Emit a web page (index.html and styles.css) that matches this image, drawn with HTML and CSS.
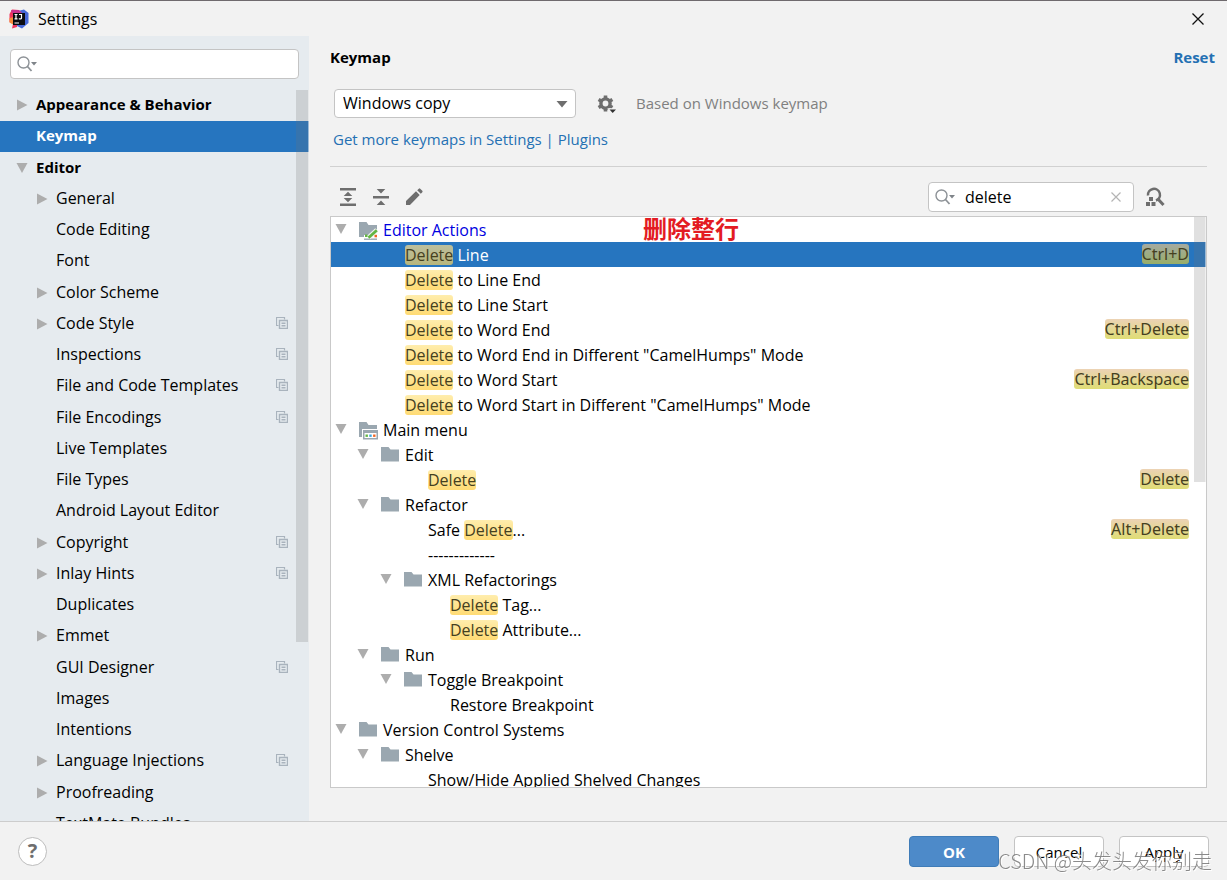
FILE: index.html
```html
<!DOCTYPE html>
<html lang="en">
  <head>
    <meta charset="UTF-8" />
    <meta name="viewport" content="width=device-width, initial-scale=1.0" />
    <title>Settings</title>
    <link rel="stylesheet" href="styles.css">
  </head>
  <body>
    <!-- Shared icons -->
    <svg class="sprite" aria-hidden="true">
      <symbol id="i-right" viewBox="0 0 12 12"><path d="M1 0.5 L11.5 6 L1 11.5Z" fill="#adadad" /></symbol>
      <symbol id="i-down" viewBox="0 0 12 12"><path d="M0.5 1 H11.5 L6 11Z" fill="#adadad" /></symbol>
      <symbol id="i-folder" viewBox="0 0 18 16"><path d="M0 0 H7.5 L9.5 2.5 H18 V14.5 H0Z" fill="#9aa7b0" /></symbol>
      <symbol id="i-folder-edit" viewBox="0 0 20 18">
        <path d="M0 0 H7.5 L9.5 3 H18 V7 L11 13 H5 V15 H0Z" fill="#9aa7b0" />
        <path d="M5 17.2 H18" stroke="#9aa7b0" stroke-width="1.4" />
        <path d="M9.5 15.5 L17.8 8" stroke="#f2f2f2" stroke-width="4.5" />
        <path d="M9.5 15.8 L17.8 8.3" stroke="#62b543" stroke-width="2.8" />
        <path d="M6 12.5 h2.5 v2.5 h-2.5Z" fill="#62b543" />
        <path d="M15.5 12.8 h2.5 v2.5 h-2.5Z" fill="#f26522" />
      </symbol>
      <symbol id="i-folder-menu" viewBox="0 0 20 18">
        <path d="M0 0 H7.5 L9.5 3 H18 V7 H3 V15 H0Z" fill="#9aa7b0" />
        <path d="M4 8 H19 V17.5 H4Z" fill="#9aa7b0" />
        <path d="M5.5 11 H17.5 V16 H5.5Z" fill="#fff" />
        <path d="M6.5 12.5 h2.4 v2.4 h-2.4Z" fill="#62b543" />
        <path d="M10.3 12.5 h2.4 v2.4 h-2.4Z" fill="#40a5dd" />
        <path d="M14.1 12.5 h2.4 v2.4 h-2.4Z" fill="#f26522" />
      </symbol>
      <symbol id="i-project" viewBox="0 0 12 12">
        <path d="M2.5 8.5 H0.5 V0.5 H8.5 V2.5" fill="none" stroke="#a9b3bd" stroke-width="1.2" />
        <path d="M3.5 3.5 H11.5 V11.5 H3.5Z M5.5 6.2 H9.5 M5.5 8.8 H9.5" fill="none" stroke="#a9b3bd" stroke-width="1.4" />
      </symbol>
      <symbol id="i-search" viewBox="0 0 20 16">
        <circle cx="6.5" cy="6.5" r="5.5" fill="none" stroke="#8d9297" stroke-width="1.4" />
        <path d="M10.5 10.5 L14.5 15" stroke="#8d9297" stroke-width="1.8" />
        <path d="M14 6 H20 L17 9.5Z" fill="#7f8489" />
      </symbol>
    </svg>

    <header class="titlebar">
      <svg class="app-icon" viewBox="0 0 20 20" aria-hidden="true">
        <path d="M0.5 5 L3 0.5 L10 1 L8 18 L3 19.5 L4 15 L0.5 13Z" fill="#f0345f" />
        <path d="M0.5 9 L5 8 V16 L0.5 13.5Z" fill="#f98b3a" />
        <path d="M9 2 L15 0.5 L19.5 4 V14 L13 19.5 L8 17Z" fill="#4668d8" />
        <path d="M2 1 L10 1 L13 4 H3Z" fill="#c8338f" />
        <path d="M4 4 H16 V16 H4Z" fill="#0b0b10" />
        <path d="M5.5 5.5 H8.5 M7 5.5 V9.8 M5.5 9.8 H8.5 M10 5.5 H12.5 V9 Q12.5 10 11 9.8 H9.8 M5.5 14 H10" fill="none" stroke="#fff" stroke-width="1.2" />
      </svg>
      <h1 class="window-title">Settings</h1>
      <button class="icon-button close" type="button" aria-label="Close">
        <svg width="12" height="12" viewBox="0 0 12 12"><path d="M0.5 0.5 L11.5 11.5 M11.5 0.5 L0.5 11.5" stroke="#111" stroke-width="1.3" /></svg>
      </button>
    </header>

    <div class="content">
      <nav class="sidebar" aria-label="Settings sections">
        <div class="search-field sidebar-search">
          <svg class="search-icon"><use href="#i-search" /></svg>
          <input type="text" aria-label="Search settings" />
        </div>
        <div class="scroll-area">
          <ul class="sections">
            <li class="top"><svg class="arrow"><use href="#i-right" /></svg><a href="#">Appearance &amp; Behavior</a></li>
            <li class="top selected"><span class="arrow"></span><a href="#">Keymap</a></li>
            <li class="top"><svg class="arrow"><use href="#i-down" /></svg><a href="#">Editor</a></li>
            <li><svg class="arrow"><use href="#i-right" /></svg><a href="#">General</a></li>
            <li><span class="arrow"></span><a href="#">Code Editing</a></li>
            <li><span class="arrow"></span><a href="#">Font</a></li>
            <li><svg class="arrow"><use href="#i-right" /></svg><a href="#">Color Scheme</a></li>
            <li><svg class="arrow"><use href="#i-right" /></svg><a href="#">Code Style</a><svg class="project"><use href="#i-project" /></svg></li>
            <li><span class="arrow"></span><a href="#">Inspections</a><svg class="project"><use href="#i-project" /></svg></li>
            <li><span class="arrow"></span><a href="#">File and Code Templates</a><svg class="project"><use href="#i-project" /></svg></li>
            <li><span class="arrow"></span><a href="#">File Encodings</a><svg class="project"><use href="#i-project" /></svg></li>
            <li><span class="arrow"></span><a href="#">Live Templates</a></li>
            <li><span class="arrow"></span><a href="#">File Types</a></li>
            <li><span class="arrow"></span><a href="#">Android Layout Editor</a></li>
            <li><svg class="arrow"><use href="#i-right" /></svg><a href="#">Copyright</a><svg class="project"><use href="#i-project" /></svg></li>
            <li><svg class="arrow"><use href="#i-right" /></svg><a href="#">Inlay Hints</a><svg class="project"><use href="#i-project" /></svg></li>
            <li><span class="arrow"></span><a href="#">Duplicates</a></li>
            <li><svg class="arrow"><use href="#i-right" /></svg><a href="#">Emmet</a></li>
            <li><span class="arrow"></span><a href="#">GUI Designer</a><svg class="project"><use href="#i-project" /></svg></li>
            <li><span class="arrow"></span><a href="#">Images</a></li>
            <li><span class="arrow"></span><a href="#">Intentions</a></li>
            <li><svg class="arrow"><use href="#i-right" /></svg><a href="#">Language Injections</a><svg class="project"><use href="#i-project" /></svg></li>
            <li><svg class="arrow"><use href="#i-right" /></svg><a href="#">Proofreading</a></li>
            <li><span class="arrow"></span><a href="#">TextMate Bundles</a></li>
          </ul>
          <div class="scrollbar"></div>
        </div>
      </nav>

      <main class="panel">
        <div class="panel-header">
          <h2>Keymap</h2>
          <a class="reset" href="#">Reset</a>
        </div>

        <div class="scheme">
          <div class="select-box">
            <select aria-label="Keymap scheme">
              <option>Windows copy</option>
            </select>
            <svg width="12" height="8" viewBox="0 0 12 8"><path d="M0.5 1 H11.5 L6 7.5Z" fill="#6e6e6e" /></svg>
          </div>
          <button class="icon-button" type="button" aria-label="Scheme actions">
            <svg width="20" height="20" viewBox="0 0 20 20">
              <circle cx="8.5" cy="9.5" r="4.6" fill="none" stroke="#6e6e6e" stroke-width="3.4" />
              <path d="M8.5 1.5 V4.5 M8.5 14.5 V17.5 M1.6 5.5 L4.2 7 M12.8 12 L15.4 13.5 M1.6 13.5 L4.2 12 M12.8 7 L15.4 5.5" stroke="#6e6e6e" stroke-width="3.6" />
              <path d="M12 15 H20 L16 19Z" fill="#f2f2f2" stroke="#f2f2f2" stroke-width="1.5" />
              <path d="M12.5 15.5 H19 L15.7 19Z" fill="#333" />
            </svg>
          </button>
          <span class="based-on">Based on Windows keymap</span>
        </div>
        <a class="more-link" href="#">Get more keymaps in Settings | Plugins</a>

        <div class="toolbar">
          <button class="icon-button" type="button" aria-label="Expand all">
            <svg width="18" height="18" viewBox="0 0 18 18"><path d="M1 0 H17 V2.4 H1Z M1 15.6 H17 V18 H1Z M9 3.8 L13.3 8 H4.7Z M4.7 10 H13.3 L9 14.2Z" fill="#6e6e6e" /></svg>
          </button>
          <button class="icon-button" type="button" aria-label="Collapse all">
            <svg width="18" height="18" viewBox="0 0 18 18"><path d="M1 8 H17 V10.4 H1Z M4.7 1 H13.3 L9 5.5Z M9 12.5 L13.3 17 H4.7Z" fill="#6e6e6e" /></svg>
          </button>
          <button class="icon-button" type="button" aria-label="Edit shortcut">
            <svg width="18" height="18" viewBox="0 0 18 18"><path d="M1 13 L11 3.3 L14.7 7 L5 17 H1Z M12.2 2.2 L13.8 0.7 Q14.5 0 15.2 0.7 L17.3 2.8 Q18 3.5 17.3 4.2 L15.8 5.8Z" fill="#6e6e6e" /></svg>
          </button>
          <div class="search-field action-search">
            <svg class="search-icon"><use href="#i-search" /></svg>
            <input type="text" value="delete" aria-label="Search actions" />
            <button class="icon-button" type="button" aria-label="Clear">
              <svg width="10" height="10" viewBox="0 0 10 10"><path d="M0.5 0.5 L9.5 9.5 M9.5 0.5 L0.5 9.5" stroke="#b4b4b4" stroke-width="1.2" /></svg>
            </button>
          </div>
          <button class="icon-button" type="button" aria-label="Find actions by shortcut">
            <svg width="20" height="20" viewBox="0 0 20 20">
              <path d="M3 8.5 A6 6 0 1 1 11 13.5" fill="none" stroke="#6e6e6e" stroke-width="2.5" />
              <path d="M12.5 11.5 L18.5 18" stroke="#6e6e6e" stroke-width="3" />
              <path d="M4 10 h4 v4 h-4Z M1 15 h4 v4 h-4Z M6.5 15 h4 v4 h-4Z" fill="#6e6e6e" />
            </svg>
          </button>
        </div>

        <div class="actions-box">
          <ul class="actions">
            <li class="group"><svg class="arrow"><use href="#i-down" /></svg><svg class="folder badge"><use href="#i-folder-edit" /></svg><span class="changed">Editor Actions</span></li>
            <li class="level-1 selected"><span><mark>Delete</mark> Line</span><kbd>Ctrl+D</kbd></li>
            <li class="level-1"><span><mark>Delete</mark> to Line End</span></li>
            <li class="level-1"><span><mark>Delete</mark> to Line Start</span></li>
            <li class="level-1"><span><mark>Delete</mark> to Word End</span><kbd>Ctrl+Delete</kbd></li>
            <li class="level-1"><span><mark>Delete</mark> to Word End in Different "CamelHumps" Mode</span></li>
            <li class="level-1"><span><mark>Delete</mark> to Word Start</span><kbd>Ctrl+Backspace</kbd></li>
            <li class="level-1"><span><mark>Delete</mark> to Word Start in Different "CamelHumps" Mode</span></li>
            <li class="group"><svg class="arrow"><use href="#i-down" /></svg><svg class="folder badge"><use href="#i-folder-menu" /></svg><span>Main menu</span></li>
            <li class="group level-1"><svg class="arrow"><use href="#i-down" /></svg><svg class="folder"><use href="#i-folder" /></svg><span>Edit</span></li>
            <li class="level-2"><span><mark>Delete</mark></span><kbd>Delete</kbd></li>
            <li class="group level-1"><svg class="arrow"><use href="#i-down" /></svg><svg class="folder"><use href="#i-folder" /></svg><span>Refactor</span></li>
            <li class="level-2"><span>Safe <mark>Delete</mark>...</span><kbd>Alt+Delete</kbd></li>
            <li class="level-2"><span>-------------</span></li>
            <li class="group level-2"><svg class="arrow"><use href="#i-down" /></svg><svg class="folder"><use href="#i-folder" /></svg><span>XML Refactorings</span></li>
            <li class="level-3"><span><mark>Delete</mark> Tag...</span></li>
            <li class="level-3"><span><mark>Delete</mark> Attribute...</span></li>
            <li class="group level-1"><svg class="arrow"><use href="#i-down" /></svg><svg class="folder"><use href="#i-folder" /></svg><span>Run</span></li>
            <li class="group level-2"><svg class="arrow"><use href="#i-down" /></svg><svg class="folder"><use href="#i-folder" /></svg><span>Toggle Breakpoint</span></li>
            <li class="level-3"><span>Restore Breakpoint</span></li>
            <li class="group"><svg class="arrow"><use href="#i-down" /></svg><svg class="folder"><use href="#i-folder" /></svg><span>Version Control Systems</span></li>
            <li class="group level-1"><svg class="arrow"><use href="#i-down" /></svg><svg class="folder"><use href="#i-folder" /></svg><span>Shelve</span></li>
            <li class="level-2"><span>Show/Hide Applied Shelved Changes</span></li>
          </ul>
          <div class="scrollbar"></div>
          <div class="note" lang="zh">删除整行</div>
        </div>
      </main>
    </div>

    <footer class="footer">
      <button class="help" type="button" aria-label="Help">?</button>
      <button class="button primary" type="button">OK</button>
      <button class="button" type="button">Cancel</button>
      <button class="button" type="button">Apply</button>
    </footer>
    <div class="watermark" lang="zh">CSDN @头发头发你别走</div>
  </body>
</html>
```
FILE: styles.css
```css
* {
  box-sizing: border-box;
}
body {
  display: flex;
  flex-direction: column;
  height: 100vh;
  margin: 0;
  overflow: hidden;
  border-top: 1px solid #6f6a6e;
  background: #f2f2f2;
  color: #000;
  font-family: "Open Sans", "Noto Sans", "Noto Sans CJK SC", sans-serif;
  font-size: 16px;
}
ul {
  margin: 0;
  padding: 0;
  list-style: none;
}
a {
  color: #2470b3;
  text-decoration: none;
}
svg {
  display: block;
  flex: none;
}
input,
select,
button {
  font: inherit;
  color: inherit;
}
.sprite {
  display: none;
}
.icon-button {
  padding: 0;
  border: none;
  background: none;
  cursor: pointer;
}

/* Title bar */
.titlebar {
  display: flex;
  align-items: center;
  flex: none;
  height: 35px;
  padding: 0 23px 0 9px;
}
.app-icon {
  width: 20px;
  height: 20px;
}
.window-title {
  flex: 1;
  margin: 0 0 0 9px;
  font-size: 16px;
  font-weight: normal;
}

.content {
  display: flex;
  flex: 1;
  min-height: 0;
}

/* Search fields */
.search-field {
  display: flex;
  align-items: center;
  height: 30px;
  padding: 0 12px 0 6px;
  border: 1px solid #c4c4c4;
  border-radius: 4px;
  background: #fff;
}
.search-field input {
  flex: 1;
  min-width: 0;
  padding: 0 0 0 10px;
  border: none;
  outline: none;
  background: none;
}
.search-icon {
  width: 20px;
  height: 16px;
}

/* Sidebar */
.sidebar {
  display: flex;
  flex-direction: column;
  flex: none;
  width: 309px;
  background: #e6ebef;
}
.sidebar-search {
  flex: none;
  margin: 13px 10px 11px;
}
.scroll-area {
  position: relative;
  flex: 1;
  min-height: 0;
  overflow: hidden;
}
.sections li {
  display: flex;
  align-items: center;
  height: 31px;
  padding: 0 21px 0 36px;
  line-height: 29px;
}
.sections li:nth-child(4n + 2) {
  margin-bottom: 1px;
}
.sections li.top {
  padding-left: 16px;
  font-size: 15px;
  font-weight: bold;
}
.sections a {
  flex: 1;
  margin-left: 8px;
  padding-bottom: 2px;
  color: inherit;
}
.sections .selected {
  background: #2675bf;
  color: #fff;
}
.arrow {
  flex: none;
  width: 12px;
  height: 12px;
  margin-bottom: 2px;
}
.project {
  width: 12px;
  height: 12px;
  margin-bottom: 3px;
}
.scrollbar {
  position: absolute;
  top: 0;
  right: 0;
  width: 13px;
  background: rgba(115, 115, 115, 0.22);
  border-right: 1px solid rgba(255, 255, 255, 0.5);
}
.scroll-area .scrollbar {
  height: 552px;
}

/* Keymap panel */
.panel {
  display: flex;
  flex-direction: column;
  flex: 1;
  min-width: 0;
  padding: 9px 12px 33px 21px;
}
.panel-header {
  display: flex;
  justify-content: space-between;
  font-size: 15px;
  font-weight: bold;
  line-height: 24px;
}
.panel-header h2 {
  margin: 0;
  font-size: 15px;
}
.scheme {
  display: flex;
  align-items: center;
  margin: 20px 0 0 4px;
}
.select-box {
  display: grid;
  align-items: center;
  width: 242px;
  margin-right: 21px;
}
.select-box select,
.select-box svg {
  grid-area: 1 / 1;
}
.select-box select {
  width: 100%;
  height: 29px;
  padding: 0 28px 2px 8px;
  border: 1px solid #c4c4c4;
  border-radius: 4px;
  background: #fff;
  appearance: none;
}
.select-box svg {
  justify-self: end;
  margin-right: 8px;
  pointer-events: none;
}
.based-on {
  margin-left: 19px;
  padding-bottom: 2px;
  color: #808080;
  font-size: 15px;
}
.more-link {
  margin-right: 8px;
  padding: 9px 3px 15px;
  border-bottom: 1px solid #d1d1d1;
  font-size: 15px;
  line-height: 24px;
}
.toolbar {
  display: flex;
  align-items: center;
  gap: 15px;
  margin: 15px 50px 4px 9px;
}
.action-search {
  width: 206px;
  margin-left: auto;
}
.toolbar > :last-child {
  margin-left: -4px;
}

/* Actions tree */
.actions-box {
  position: relative;
  flex: 1;
  min-height: 0;
  margin-right: 8px;
  border: 1px solid #c9c9c9;
  background: #fff;
}
.actions {
  height: 100%;
  overflow: hidden;
}
.actions li {
  display: flex;
  align-items: center;
  height: 25px;
  padding: 0 17px 0 52px;
  line-height: 24px;
  white-space: pre;
}
.actions .group {
  padding-left: 4px;
}
.actions .level-1 {
  padding-left: 74px;
}
.actions .level-2 {
  padding-left: 97px;
}
.actions .level-3 {
  padding-left: 119px;
}
.actions .group.level-1 {
  padding-left: 26px;
}
.actions .group.level-2 {
  padding-left: 49px;
}
.actions .selected {
  background: #2675bf;
  color: #fff;
}
.folder {
  width: 18px;
  height: 16px;
  margin: 0 6px 0 12px;
}
.folder.badge {
  width: 20px;
  height: 18px;
  margin: 3px 4px 0 12px;
}
.changed {
  color: #0000e0;
}
mark {
  display: inline-block;
  border-radius: 3px;
  background: linear-gradient(#ffedad, #ffdb74);
  color: #45401f;
  line-height: 20px;
}
kbd {
  margin: 0 0 1px auto;
  border-radius: 3px;
  background: linear-gradient(#ecd3b5, #dfdd75);
  color: #45401f;
  font-family: "Noto Sans", sans-serif;
  font-size: 16px;
  line-height: 20px;
}
.selected mark {
  background: linear-gradient(#bdbf9d, #b8b67c);
}
.selected kbd {
  background: linear-gradient(#a6aaa0, #98ae68);
}
.actions-box .scrollbar {
  width: 12px;
  height: 265px;
}
.note {
  position: absolute;
  top: -2px;
  left: 312px;
  color: #e31b23;
  font-family: "Noto Sans CJK SC", sans-serif;
  font-size: 24px;
  font-weight: bold;
  line-height: 26px;
}

/* Footer */
.footer {
  display: flex;
  align-items: center;
  flex: none;
  gap: 15px;
  height: 59px;
  padding: 0 18px;
  border-top: 1px solid #cdcdcd;
  font-size: 15px;
}
.help {
  width: 29px;
  height: 29px;
  margin-right: auto;
  padding: 0;
  border: 1px solid #bdbdbd;
  border-radius: 50%;
  background: #fff;
  color: #6e6e6e;
  font-size: 20px;
  font-weight: bold;
  line-height: 26px;
}
.button {
  width: 90px;
  height: 31px;
  padding: 1px 0 0;
  border: 1px solid #c4c4c4;
  border-radius: 4px;
  background: #fff;
}
.button.primary {
  border-color: #3f7cb8;
  background: #4d8ac9;
  color: #fff;
  font-weight: bold;
}
.watermark {
  position: fixed;
  right: 15px;
  bottom: 5px;
  color: rgba(110, 110, 110, 0.8);
  font-family: "Noto Sans CJK SC", sans-serif;
  font-size: 20px;
  font-weight: 300;
  line-height: 28px;
  text-shadow: 1px 1px 0 #fff;
  pointer-events: none;
}
```
